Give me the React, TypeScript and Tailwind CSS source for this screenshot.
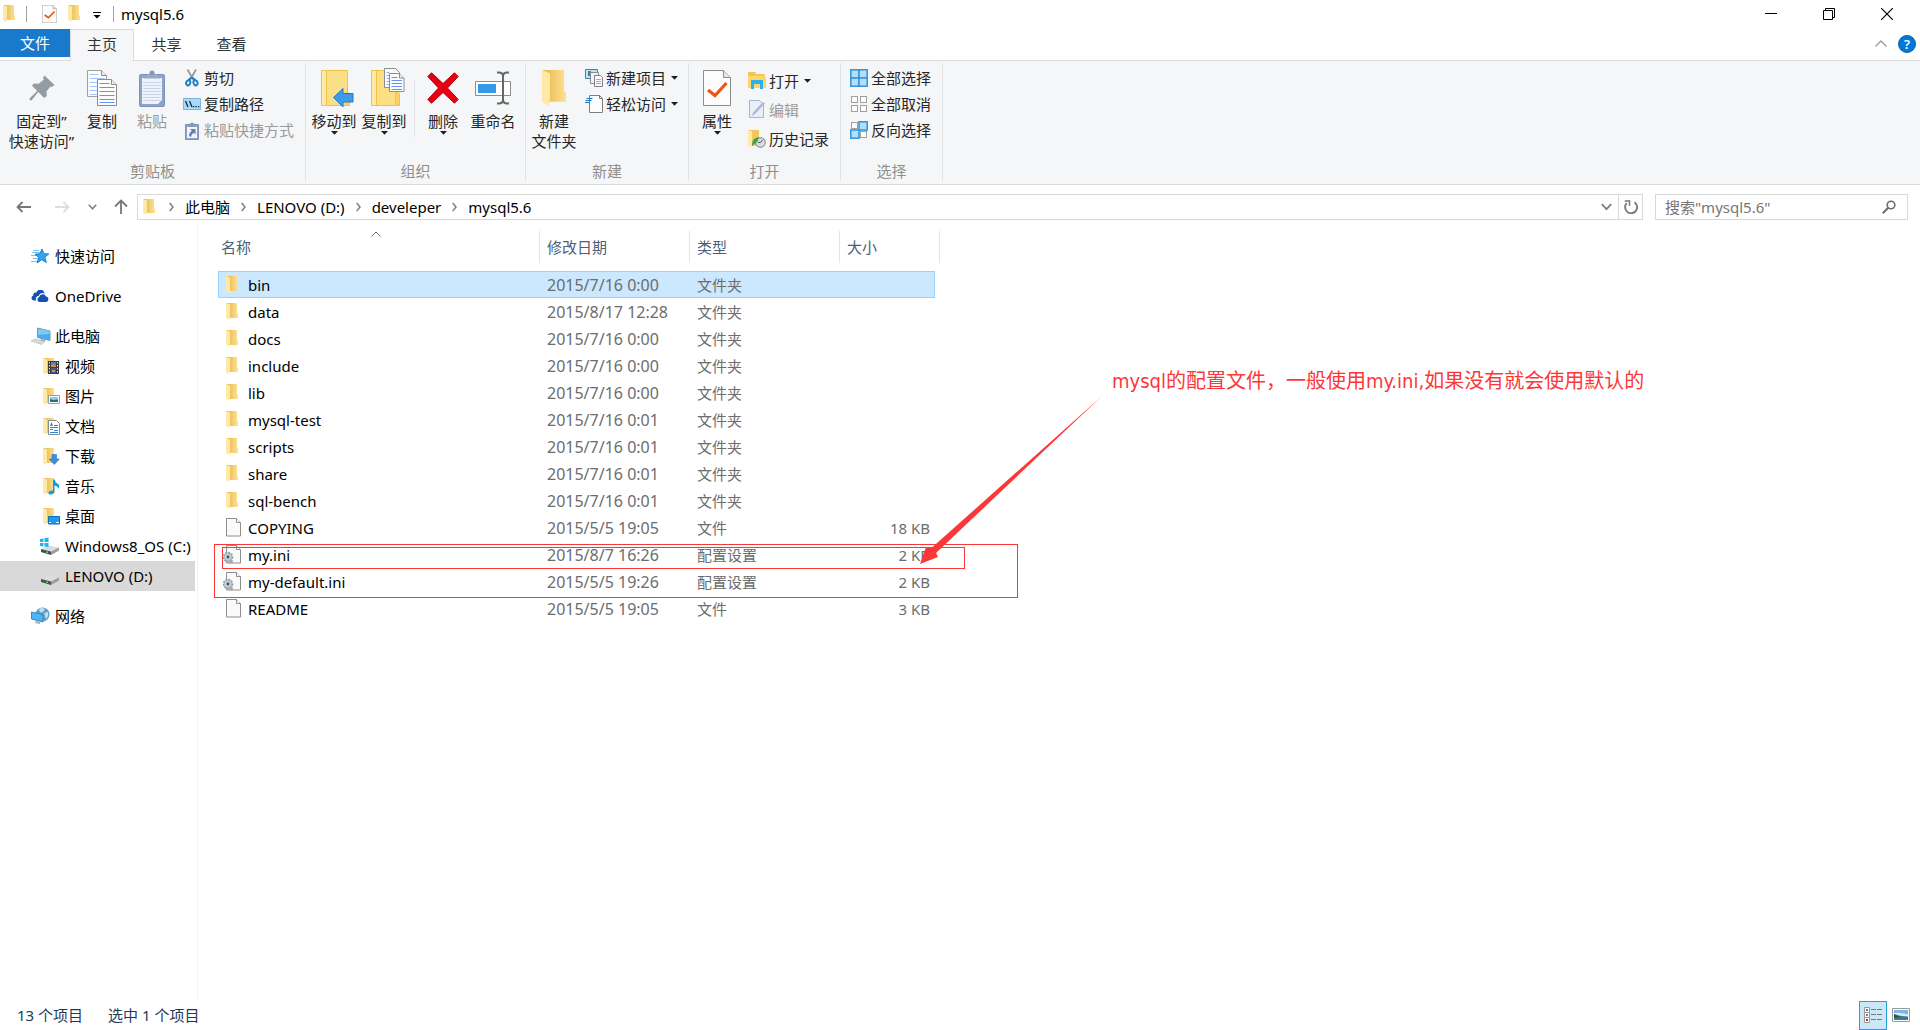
import { ReactNode, useState } from 'react';

interface FileEntry {
  name: string;
  date: string;
  kind: 'folder' | 'file' | 'ini';
  size?: string;
}

const files: FileEntry[] = [
  { name: 'bin', date: '2015/7/16 0:00', kind: 'folder' },
  { name: 'data', date: '2015/8/17 12:28', kind: 'folder' },
  { name: 'docs', date: '2015/7/16 0:00', kind: 'folder' },
  { name: 'include', date: '2015/7/16 0:00', kind: 'folder' },
  { name: 'lib', date: '2015/7/16 0:00', kind: 'folder' },
  { name: 'mysql-test', date: '2015/7/16 0:01', kind: 'folder' },
  { name: 'scripts', date: '2015/7/16 0:01', kind: 'folder' },
  { name: 'share', date: '2015/7/16 0:01', kind: 'folder' },
  { name: 'sql-bench', date: '2015/7/16 0:01', kind: 'folder' },
  { name: 'COPYING', date: '2015/5/5 19:05', kind: 'file', size: '18 KB' },
  { name: 'my.ini', date: '2015/8/7 16:26', kind: 'ini', size: '2 KB' },
  { name: 'my-default.ini', date: '2015/5/5 19:26', kind: 'ini', size: '2 KB' },
  { name: 'README', date: '2015/5/5 19:05', kind: 'file', size: '3 KB' },
];

const kindLabels = { folder: '文件夹', file: '文件', ini: '配置设置' };

/* ---------- icons ---------- */

const FolderShape = () => (
  <>
    <defs>
      <linearGradient id="folderBack" x1="0" x2="1" y1="0" y2="0">
        <stop offset="0.2" stopColor="#e9bd58" />
        <stop offset="1" stopColor="#ffe292" />
      </linearGradient>
    </defs>
    <path d="M0 0h11v10l1 .6V15H3z" fill="url(#folderBack)" />
    <path d="M0 0l4 1.6v12L3.2 17 0 15z" fill="#ffe9a6" />
  </>
);

const FolderIcon = ({ className = 'w-3 h-[17px]' }: { className?: string }) => (
  <svg viewBox="0 0 12 17" className={className} preserveAspectRatio="none">
    <FolderShape />
  </svg>
);

const PageIcon = () => (
  <svg viewBox="0 0 18 19" className="w-[18px] h-[19px]">
    <path d="M3.500.5h10l4 4V18h-14z" fill="#fafafa" stroke="#8e8e8e" />
    <path d="M13.500.5v4h4" fill="#fff" stroke="#8e8e8e" />
  </svg>
);

const IniIcon = () => (
  <svg viewBox="0 0 18 19" className="w-[18px] h-[19px]">
    <path d="M3.500.5h10l4 4V18h-14z" fill="#fafafa" stroke="#8e8e8e" />
    <path d="M13.500.5v4h4" fill="#fff" stroke="#8e8e8e" />
    <circle cx="5" cy="12" r="4.500" fill="#b7c3cd" stroke="#8d99a3" strokeWidth="1.500" strokeDasharray="1.800 1.200" />
    <circle cx="5" cy="12" r="3.200" fill="#c3ced6" />
    <circle cx="5" cy="12" r="1.400" fill="#46525c" />
    <circle cx="8" cy="16.500" r="2" fill="#9fabb5" />
  </svg>
);

const DownArrow = () => (
  <svg viewBox="0 0 7 4" className="w-[7px] h-1 shrink-0">
    <path d="M0 0h7L3.500 3.800z" fill="#1e1e1e" />
  </svg>
);

const CheckPage = ({ className }: { className: string }) => (
  <svg viewBox="0 0 28 36" className={className} preserveAspectRatio="none">
    <path d="M.5.5h20l7 7v28H.5z" fill="#fcfcfc" stroke="#8c8c8c" />
    <path d="M20.500.5v7h7" fill="#e6e6e6" stroke="#8c8c8c" />
    <path d="M5 20l7 5.500L23.500 13" fill="none" stroke="#f0550f" strokeWidth="3.200" />
  </svg>
);

const PinIcon = () => (
  <svg viewBox="0 0 26 26" className="w-[26px] h-[26px]">
    <path d="M15.500.5L25.500 10l-2.500 2-1.500-.4-4 4.600.3 4.800-2.600 2-6-6L2.500 25.500.5 25l.2-1.800L8.200 16 3 10.800l1.800-2.300 5 .2 5-4.300-.8-1.600z" fill="#939ca3" />
  </svg>
);

const CopyIcon = () => (
  <svg viewBox="0 0 30 36" className="w-[30px] h-9">
    <path d="M.5.5h14l5 5v21H.5z" fill="#fcfcfc" stroke="#a0a0a0" />
    <path d="M14.500.5v5h5" fill="#eee" stroke="#8c8c8c" />
    <path d="M2.500 4.500h9M2.500 8.500h15M2.500 12.500h15M2.500 16.500h8M2.500 20.500h8M2.500 24.500h8" stroke="#a9c6fb" />
    <path d="M10.500 9.500h14l5 5v21h-19z" fill="#fcfcfc" stroke="#8c8c8c" />
    <path d="M24.500 9.500v5h5" fill="#eee" stroke="#8c8c8c" />
    <path d="M12.500 13.500h10M12.500 17.500h15M12.500 21.500h15M12.500 25.500h15M12.500 29.500h15M12.500 32.500h15" stroke="#5f96f5" />
  </svg>
);

const PasteIcon = () => (
  <svg viewBox="0 0 26 37" className="w-[26px] h-[37px]">
    <rect x=".5" y="4.500" width="25" height="32" rx="1.500" fill="#8ea2c9" stroke="#7f92b8" />
    <path d="M3 8h20v26H3z" fill="#eef2fa" />
    <path d="M4 12.500h18M4 15.500h18M4 18.500h18M4 21.500h18M4 24.500h18M4 27.500h18M4 30.500h18" stroke="#c9d4ea" />
    <path d="M5 8.500l3-4h2.500a2.500 2.500 0 015 0H18l3 4z" fill="#9caac6" />
    <circle cx="13" cy="3" r="2.500" fill="#8896b5" />
    <path d="M23 30v4h-4z" fill="#8ea2c9" />
  </svg>
);

const ScissorsIcon = () => (
  <svg viewBox="0 0 14 18" className="w-3.5 h-[18px]">
    <path d="M2.500.5L8.500 11M11 .5L5 11" stroke="#8b959c" strokeWidth="1.600" />
    <path d="M6.500 8.500l-3 2.500M7 8.500l3.500 2.500" stroke="#1d80c4" strokeWidth="2" />
    <ellipse cx="3.200" cy="13.800" rx="2" ry="2.600" transform="rotate(20 3.200 13.800)" fill="none" stroke="#1d80c4" strokeWidth="2" />
    <ellipse cx="10.500" cy="13.800" rx="2" ry="2.600" transform="rotate(-20 10.500 13.800)" fill="none" stroke="#1d80c4" strokeWidth="2" />
  </svg>
);

const PathIcon = () => (
  <svg viewBox="0 0 18 12" className="w-[18px] h-3">
    <path d="M.5.5h17v11H.5z" fill="#a8dbfb" stroke="#7cb4dc" />
    <path d="M2.500 3l2.500 6M6.500 3L9 9" stroke="#1b2a38" strokeWidth="1.300" />
    <path d="M10 8h1.300v1.300H10zM12.500 8h1.300v1.300h-1.300zM15 8h1.300v1.300H15z" fill="#1b2a38" />
  </svg>
);

const PasteShortcutIcon = () => (
  <svg viewBox="0 0 14 19" className="w-3.5 h-[19px]">
    <path d="M.5 3.500h13v15H.5z" fill="#8ea2c9" stroke="#8195bc" />
    <path d="M2 6h10v11H2z" fill="#f1f4fa" />
    <path d="M3.500 5.500l1-3h1.300a1.300 1.300 0 012.500 0h1.300l1 3z" fill="#8795b3" />
    <path d="M5 8h5.500v5.500L8.700 11.800Q6 13.500 6 16L4 15q0-3.500 2.800-5.200z" fill="#667fae" />
  </svg>
);

const BigFolder = () => (
  <>
    <path d="M.5 2.500h26v35H.5z" fill="#fbdf84" stroke="#edc44b" />
    <path d="M5.500 3v34" stroke="#edc44b" />
    <path d="M1 3h4v34H1z" fill="#ffe9a4" />
    <path d="M24.500 37.500v-12l2-1.500 2 1.500v12z" fill="#fbd364" stroke="#edc44b" />
  </>
);

const MoveToIcon = () => (
  <svg viewBox="0 0 34 40" className="w-[34px] h-10 ml-2">
    <BigFolder />
    <path d="M12.500 29.500l9.500-9v5h10v8.500H22v5z" fill="#3d9be9" stroke="#2579c4" />
  </svg>
);

const CopyToIcon = () => (
  <svg viewBox="0 0 34 40" className="w-[34px] h-10 ml-2">
    <BigFolder />
    <path d="M13.500.5h11l4 4v15h-15z" fill="#fcfcfc" stroke="#8c8c8c" />
    <path d="M15.500 4.500h3M15.500 7.500h3M15.500 10.500h3M15.500 13.500h3M15.500 16.500h3" stroke="#8ab2f7" />
    <path d="M18.500 5.500h10l4.500 4.500v13.500H18.500z" fill="#fcfcfc" stroke="#8c8c8c" />
    <path d="M28.500 5.500V10H33" fill="#eee" stroke="#8c8c8c" />
    <path d="M20.500 9.500h6M20.500 12.500h10.500M20.500 15.500h10.500M20.500 18.500h10.500M20.500 21.500h10.500" stroke="#5f96f5" />
  </svg>
);

const DeleteIcon = () => (
  <svg viewBox="0 0 32 32" className="w-8 h-8">
    <path d="M4.500.8L16 11.500 27.500.8l3.700 3.700L20.500 16l10.700 11.500-3.700 3.700L16 20.500 4.500 31.200.8 27.500 11.500 16 .8 4.500z" fill="#e60012" stroke="#b4000e" />
  </svg>
);

const RenameIcon = () => (
  <svg viewBox="0 0 37 34" className="w-[37px] h-[34px]">
    <path d="M.5 10.500h35v14H.5z" fill="#fff" stroke="#8c8c8c" />
    <path d="M3 13h18v9H3z" fill="#3399ea" />
    <path d="M22 1.500h2q4 0 4 4v23q0 4-4 4h-2M34 1.500h-2q-4 0-4 4v23q0 4 4 4h2" fill="none" stroke="#666" strokeWidth="2" />
  </svg>
);

const NewItemIcon = () => (
  <svg viewBox="0 0 18 18" className="w-[18px] h-[18px]">
    <path d="M.5.5h12v9H.5z" fill="#bfe3f5" stroke="#3f84a8" />
    <path d="M3 2h3v5H3z" fill="#3f84a8" />
    <path d="M5.500 3.500h8v11h-8z" fill="#f4f4f4" stroke="#8c8c8c" />
    <path d="M9.500 6.500h6l2 2v9h-8z" fill="#fcfcfc" stroke="#7d7d8c" />
    <path d="M11 10.500h5M11 12.500h5M11 14.500h5" stroke="#8aaef0" />
  </svg>
);

const EasyAccessIcon = () => (
  <svg viewBox="0 0 18 18" className="w-[18px] h-[18px]">
    <path d="M4.500.5h10l3 3v14h-13z" fill="#fcfcfc" stroke="#7d7d7d" />
    <path d="M14.500.5v3h3" fill="none" stroke="#7d7d7d" />
    <path d="M1.500 3.500h6M.5 5.500h6M0 7.500h4.500" stroke="#1b74c0" strokeWidth="1.200" />
  </svg>
);

const OpenIcon = () => (
  <svg viewBox="0 0 18 17" className="w-[18px] h-[17px]">
    <path d="M0 0h8v2h9v3h1v11H0z" fill="#fbd76b" />
    <path d="M0 1h7M1 3h15" stroke="#e9b53a" />
    <path d="M3 8h12v9h-3v-5H6v5H3z" fill="#2fb0ea" />
  </svg>
);

const EditIcon = () => (
  <svg viewBox="0 0 17 19" className="w-[17px] h-[19px]">
    <path d="M.5.5h10l4 4v13H.5z" fill="#e9eef8" stroke="#a6b5d2" />
    <path d="M2.500 16.500l2-4.500L14 2l2 1.500L6 14z" fill="#a9b9d7" />
  </svg>
);

const HistoryIcon = () => (
  <svg viewBox="0 0 18 18" className="w-[18px] h-[18px]">
    <path d="M0 0h11v8H9v8H4z" fill="#f0c863" />
    <path d="M0 0l4 1.600V14l-1 3-3-2z" fill="#ffe9a6" />
    <circle cx="12.500" cy="12.500" r="4.800" fill="#d9dde0" stroke="#7c8083" />
    <path d="M12.500 12.500l2-2.500M12.500 12.500h-2.500" stroke="#555" />
    <path d="M4 16q-.5-8 7-9L9.500 11.500z" fill="#2fa83c" />
  </svg>
);

const SelectIcon = ({ filled }: { filled: boolean[] }) => (
  <svg viewBox="0 0 18 18" className="w-[18px] h-[18px]">
    {filled.map((on, i) => {
      const inset = on ? 0.800 : 1.500;
      const side = on ? 8.200 : 6;
      return (
        <rect
          key={i}
          x={i % 2 ? (on ? 9 : 10.500) : inset}
          y={i > 1 ? (on ? 9 : 10.500) : inset}
          width={side}
          height={side}
          fill={on ? '#b5def9' : '#fcfcfc'}
          stroke={on ? '#3a96dd' : '#a0a0a0'}
          strokeWidth={on ? 1.600 : 1}
        />
      );
    })}
  </svg>
);

const Chevron = () => (
  <svg viewBox="0 0 5 10" className="w-[5px] h-2.5 shrink-0">
    <path d="M.7 1L4 5 .7 9" fill="none" stroke="#808080" strokeWidth="1.500" />
  </svg>
);

const StarIcon = () => (
  <svg viewBox="0 0 18 17" className="w-[18px] h-[17px]">
    <path d="M1 4.500h8M2 2.500h6M0 7.500h6M2 10.500h5M0 13.500h6" stroke="#7cc3f2" />
    <path d="M11 1l1.800 4.700 5 .3-4 3 1.500 5.500-4.500-2.800L6 15l1.800-5.500L4 6.200l5-.5z" fill="#35a5ef" stroke="#1b7fc9" />
  </svg>
);

const CloudIcon = () => (
  <svg viewBox="0 0 18 12" className="w-[18px] h-3">
    <path d="M5 10.500H2.500a2.600 2.600 0 01-.3-5A3 3 0 015.500 2.500 4 4 0 0113 2q.6 1 .5 1.600Q9.500 1.500 7.500 6 4 6.500 5 10.500z" fill="#1650b4" />
    <path d="M8 12a2.600 2.600 0 01.2-5 3.700 3.700 0 016.900-.6A2.900 2.900 0 0115.500 12z" fill="#1650b4" />
    <path d="M7.500 12a3 3 0 01.2-5.500" fill="none" stroke="#fff" strokeWidth=".8" />
  </svg>
);

const PcIcon = () => (
  <svg viewBox="0 0 20 18" className="w-5 h-[18px]">
    <path d="M6.500 1l12.500 3v9.500L6.500 10.500z" fill="#45aef3" stroke="#7d95a5" />
    <path d="M7 1.500L18.500 4v3L7 8z" fill="#7cc9f8" />
    <path d="M10 12l4 1v2l-5-1z" fill="#9aa4ab" />
    <path d="M0 14l4-2 10 2.500-3.500 3z" fill="#d3d9dd" stroke="#b4bcc2" strokeWidth=".6" />
  </svg>
);

const NavFolder = ({ children }: { children: ReactNode }) => (
  <svg viewBox="0 0 17 17" className="w-[17px] h-[17px]">
    <FolderShape />
    {children}
  </svg>
);

const DriveShape = () => (
  <>
    <path d="M1 12l7-3.500 11 2-8 4z" fill="#dcdcdc" />
    <path d="M1 12l10 2.500V18L1 15z" fill="#4c4f51" />
    <path d="M11 14.500l8-4v3L11 18z" fill="#9b9b9b" />
    <path d="M6 14.500h2V16H6z" fill="#4be04b" />
  </>
);

const WindowsDriveIcon = () => (
  <svg viewBox="0 0 20 18" className="w-5 h-[18px]">
    <DriveShape />
    <path d="M0 2l3.500-.6V5H0zM4.500 1.200L8.500.5V5h-4zM0 6h3.500v3.500L0 9zM4.500 6h4v4l-4-.5z" fill="#19b6ee" />
  </svg>
);

const DriveIcon = () => (
  <svg viewBox="0 0 20 18" className="w-5 h-[18px]">
    <DriveShape />
  </svg>
);

const NetworkIcon = () => (
  <svg viewBox="0 0 19 18" className="w-[19px] h-[18px]">
    <circle cx="11.500" cy="7.500" r="7" fill="#5f9fc2" />
    <path d="M8 2q3-2 6 0l-2 3-3 .5zM13 6l4-1q1 4-2 7z" fill="#bfe0ec" />
    <path d="M.5 5l11.500 2.500V15L.5 12z" fill="#4bb5f5" stroke="#3c87b8" />
    <path d="M5 14l4 1v2l-5-1z" fill="#a5adb3" />
  </svg>
);

/* ---------- ribbon ---------- */

interface RibbonGroupProps {
  label: string;
  className: string;
  pad?: string;
  children: ReactNode;
}

const RibbonGroup = ({ label, className, pad = 'pl-[3px]', children }: RibbonGroupProps) => (
  <div className={`flex flex-col border-r border-[#e0e1e3] my-0.5 ${className}`}>
    <div className={`flex items-start h-[98px] pt-0.5 ${pad}`}>{children}</div>
    <div className="text-center text-[#8f8f8f]">{label}</div>
  </div>
);

interface BigButtonProps {
  icon: ReactNode;
  lines: string[];
  arrow?: boolean;
  disabled?: boolean;
  className?: string;
}

const BigButton = ({ icon, lines, arrow, disabled, className = 'w-[50px]' }: BigButtonProps) => (
  <button
    disabled={disabled}
    className={`flex flex-col items-center shrink-0 pt-0.5 whitespace-nowrap text-[#262626] disabled:text-[#9a9a9a] ${className}`}
  >
    <span className="flex items-center justify-center h-[42px] mb-0.5">{icon}</span>
    {lines.map((line) => (
      <span key={line}>{line}</span>
    ))}
    {arrow && <DownArrow />}
  </button>
);

interface SmallButtonProps {
  icon: ReactNode;
  text: string;
  arrow?: boolean;
  disabled?: boolean;
  className?: string;
}

const SmallButton = ({ icon, text, arrow, disabled, className = 'h-[26px]' }: SmallButtonProps) => (
  <button
    disabled={disabled}
    className={`flex items-center gap-[3px] whitespace-nowrap text-[#262626] disabled:text-[#9a9a9a] ${className}`}
  >
    <span className="flex justify-center w-[18px]">{icon}</span>
    <span>{text}</span>
    {arrow && <span className="ml-0.5"><DownArrow /></span>}
  </button>
);

const Ribbon = () => (
  <div className="flex bg-[#f5f6f7] border-y border-[#dadbdc] pb-px">
    <RibbonGroup label="剪贴板" className="w-[306px]" pad="pl-1.5">
      <BigButton icon={<PinIcon />} lines={['固定到”', '快速访问”']} className="w-[71px]" />
      <BigButton icon={<CopyIcon />} lines={['复制']} />
      <BigButton icon={<PasteIcon />} lines={['粘贴']} disabled />
      <div className="ml-1.5">
        <SmallButton icon={<ScissorsIcon />} text="剪切" />
        <SmallButton icon={<PathIcon />} text="复制路径" />
        <SmallButton icon={<PasteShortcutIcon />} text="粘贴快捷方式" disabled />
      </div>
    </RibbonGroup>
    <RibbonGroup label="组织" className="w-[220px]">
      <BigButton icon={<MoveToIcon />} lines={['移动到']} arrow />
      <BigButton icon={<CopyToIcon />} lines={['复制到']} arrow />
      <div className="w-px h-14 mt-4 ml-[5px] mr-[3px] bg-[#e0e1e3]" />
      <BigButton icon={<DeleteIcon />} lines={['删除']} arrow />
      <BigButton icon={<RenameIcon />} lines={['重命名']} />
    </RibbonGroup>
    <RibbonGroup label="新建" className="w-[163px]">
      <BigButton icon={<FolderIcon className="w-6 h-9" />} lines={['新建', '文件夹']} />
      <div className="ml-1.5">
        <SmallButton icon={<NewItemIcon />} text="新建项目" arrow />
        <SmallButton icon={<EasyAccessIcon />} text="轻松访问" arrow />
      </div>
    </RibbonGroup>
    <RibbonGroup label="打开" className="w-[152px]">
      <BigButton icon={<CheckPage className="w-7 h-9" />} lines={['属性']} arrow />
      <div className="ml-1.5 pt-px">
        <SmallButton icon={<OpenIcon />} text="打开" arrow className="h-[29px]" />
        <SmallButton icon={<EditIcon />} text="编辑" disabled className="h-[29px]" />
        <SmallButton icon={<HistoryIcon />} text="历史记录" className="h-[29px]" />
      </div>
    </RibbonGroup>
    <RibbonGroup label="选择" className="w-[102px]" pad="pl-[9px]">
      <div>
        <SmallButton icon={<SelectIcon filled={[true, true, true, true]} />} text="全部选择" />
        <SmallButton icon={<SelectIcon filled={[false, false, false, false]} />} text="全部取消" />
        <SmallButton icon={<SelectIcon filled={[false, true, true, false]} />} text="反向选择" />
      </div>
    </RibbonGroup>
  </div>
);

/* ---------- title, tabs, address ---------- */

const TitleBar = () => (
  <header className="flex items-center h-[29px] pl-[3px] pr-1 pb-0.5">
    <FolderIcon />
    <div className="w-px h-4 ml-[11px] mr-[15px] bg-[#a0a0a0]" />
    <button aria-label="属性"><CheckPage className="w-[15px] h-[18px]" /></button>
    <button aria-label="新建文件夹" className="ml-[11px]"><FolderIcon /></button>
    <button aria-label="自定义快速访问工具栏" className="ml-[13px]">
      <svg viewBox="0 0 8 7" className="w-2 h-[7px] mt-1">
        <path d="M0 .5h8" stroke="#000" />
        <path d="M.5 3h7L4 6.500z" fill="#000" />
      </svg>
    </button>
    <div className="w-px h-4 ml-3 mr-[7px] bg-[#a0a0a0]" />
    <h1>mysql5.6</h1>
    <div className="flex ml-auto">
      <button aria-label="最小化" className="flex justify-center w-[58px]">
        <svg viewBox="0 0 12 12" className="w-3 h-3"><path d="M0 5.500h12" stroke="#000" /></svg>
      </button>
      <button aria-label="还原" className="flex justify-center w-[58px]">
        <svg viewBox="0 0 12 12" className="w-3 h-3" fill="none" stroke="#000">
          <path d="M.5 2.500h9v9h-9zM2.500 2.500v-2h9v9h-2" />
        </svg>
      </button>
      <button aria-label="关闭" className="flex justify-center w-[58px]">
        <svg viewBox="0 0 12 12" className="w-3 h-3"><path d="M0 0l12 12M12 0L0 12" stroke="#000" strokeWidth="1.200" /></svg>
      </button>
    </div>
  </header>
);

const TabBar = () => (
  <div className="flex h-[31px] text-[#333]">
    <button className="w-[70px] h-7 bg-[#1979ca] text-white">文件</button>
    <button className="relative z-10 w-16 h-8 pb-[3px] bg-[#f5f6f7] border border-b-0 border-[#dadbdc]">主页</button>
    <button className="w-[65px] pb-0.5">共享</button>
    <button className="w-[65px] pb-0.5">查看</button>
    <div className="flex items-center gap-[11px] ml-auto pr-1 pb-0.5">
      <button aria-label="最小化功能区">
        <svg viewBox="0 0 12 7" className="w-3 h-[7px]"><path d="M.5 6.500L6 1l5.500 5.500" fill="none" stroke="#999" strokeWidth="1.300" /></svg>
      </button>
      <button aria-label="帮助" className="flex items-center justify-center w-[18px] h-[18px] rounded-full bg-[#0078d7] border border-[#0a63b0] text-white text-[13px] font-semibold">
        ?
      </button>
    </div>
  </div>
);

const crumbs = ['此电脑', 'LENOVO (D:)', 'develeper', 'mysql5.6'];

const AddressBar = () => (
  <div className="flex items-center h-10 pl-4 pr-3 pb-px pt-1">
    <button aria-label="返回">
      <svg viewBox="0 0 15 12" className="w-[15px] h-3"><path d="M15 6H1.500M6.500 1l-5 5 5 5" fill="none" stroke="#777" strokeWidth="1.800" /></svg>
    </button>
    <button aria-label="前进" disabled className="ml-6">
      <svg viewBox="0 0 15 12" className="w-[15px] h-3"><path d="M0 6h13.500M8.500 1l5 5-5 5" fill="none" stroke="#ddd" strokeWidth="1.800" /></svg>
    </button>
    <button aria-label="最近浏览的位置" className="ml-[18px]">
      <svg viewBox="0 0 9 6" className="w-[9px] h-1.5"><path d="M.8.8l3.700 4 3.700-4" fill="none" stroke="#808080" strokeWidth="1.600" /></svg>
    </button>
    <button aria-label="上移" className="ml-[17px]">
      <svg viewBox="0 0 14 15" className="w-3.5 h-[15px]"><path d="M7 15V1.500M1 7.500l6-6 6 6" fill="none" stroke="#777" strokeWidth="1.800" /></svg>
    </button>
    <div className="flex flex-1 items-center h-[26px] ml-[9px] border border-[#d9d9d9]">
      <span className="ml-[5px] mr-[14px]"><FolderIcon className="w-3 h-4" /></span>
      {crumbs.map((crumb) => (
        <span key={crumb} className="flex items-center mr-[11px] gap-[11px]">
          <Chevron />
          <button>{crumb}</button>
        </span>
      ))}
      <button aria-label="以前的位置" className="ml-auto mr-1.5">
        <svg viewBox="0 0 11 8" className="w-[11px] h-2"><path d="M.8 1.200l4.700 5 4.700-5" fill="none" stroke="#808080" strokeWidth="1.800" /></svg>
      </button>
      <button aria-label="刷新" className="flex items-center justify-center w-6 h-full border-l border-[#d9d9d9]">
        <svg viewBox="0 0 14 14" className="w-3.5 h-3.5" fill="none" stroke="#777" strokeWidth="1.800">
          <path d="M10.500 2.300A6 6 0 112.700 3.200" />
          <path d="M.8 1h4.700v4.700" strokeWidth="1.500" />
        </svg>
      </button>
    </div>
    <label className="flex items-center w-[253px] h-[26px] ml-3 pl-[9px] pr-[11px] border border-[#d9d9d9]">
      <input
        type="text"
        aria-label="搜索"
        placeholder={'搜索"mysql5.6"'}
        className="flex-1 min-w-0 outline-none placeholder:text-[#767676]"
      />
      <svg viewBox="0 0 14 14" className="w-3.5 h-3.5" fill="none" stroke="#6d6d6d">
        <circle cx="9" cy="5" r="3.800" strokeWidth="1.600" />
        <path d="M6.200 7.800L.8 13.200" strokeWidth="2" />
      </svg>
    </label>
  </div>
);

/* ---------- navigation pane ---------- */

interface NavItemProps {
  icon: ReactNode;
  text: string;
  child?: boolean;
  selected?: boolean;
}

const NavItem = ({ icon, text, child, selected }: NavItemProps) => (
  <a
    href="#"
    className={`flex items-center h-[30px] whitespace-nowrap overflow-hidden ${child ? 'pl-10' : 'pl-[31px]'} ${selected ? 'bg-[#d9d9d9]' : ''}`}
  >
    <span className={`flex shrink-0 w-5 ${child ? 'justify-end mr-[5px]' : 'mr-1'}`}>{icon}</span>
    {text}
  </a>
);

const NavPane = () => (
  <nav className="flex flex-col gap-2.5 w-[198px] shrink-0 pt-4 pr-0.5 border-r border-[#f3f3f3]">
    <NavItem icon={<StarIcon />} text="快速访问" />
    <NavItem icon={<CloudIcon />} text="OneDrive" />
    <div>
      <NavItem icon={<PcIcon />} text="此电脑" />
      <NavItem
        child
        text="视频"
        icon={
          <NavFolder>
            <path d="M5 3h11v13H5z" fill="#3c3c3c" />
            <path d="M8 4h5v5H8z" fill="#4a80d8" />
            <path d="M8 10h5v5H8z" fill="#2e5fb4" />
            <path d="M8 7l3-1 2 2v1H8zM9 12h3v2H9z" fill="#d98f3c" />
            <path d="M6.500 4v12M14.500 4v12" stroke="#ddd" strokeDasharray="1.500 1.500" />
          </NavFolder>
        }
      />
      <NavItem
        child
        text="图片"
        icon={
          <NavFolder>
            <path d="M5.500 7.500h11v8h-11z" fill="#fff" stroke="#9b9b9b" />
            <path d="M7 9h8v5H7z" fill="#8cc8f0" />
            <path d="M7 11l3 1 5-.5V14H7z" fill="#2f6d77" />
          </NavFolder>
        }
      />
      <NavItem
        child
        text="文档"
        icon={
          <NavFolder>
            <path d="M5.500 2.500h8l3 3v11h-11z" fill="#fff" stroke="#8c8c8c" />
            <path d="M7 9.500h8M7 11.500h3M7 14.500h8M11 7.500h4M11 12.500h4" stroke="#2f8ad6" />
            <path d="M7 8l1.500-4L10 8z" fill="#2f8ad6" />
          </NavFolder>
        }
      />
      <NavItem
        child
        text="下载"
        icon={
          <NavFolder>
            <path d="M9 6.500h4.500V11h2.800l-5 5.500L6.200 11H9z" fill="#3b8fdd" stroke="#2a74bd" strokeWidth=".6" />
          </NavFolder>
        }
      />
      <NavItem
        child
        text="音乐"
        icon={
          <NavFolder>
            <path d="M10 1.500h1.500q.5 3 3.500 4.500 2 2 .5 5-.5-3-4-3.500V14q-1 2.500-4 2.500-2.500 0-2-2Q6.500 12 10 12.500z" fill="#0c9bf2" />
          </NavFolder>
        }
      />
      <NavItem
        child
        text="桌面"
        icon={
          <NavFolder>
            <path d="M5.500 8.500h11v7.500h-11z" fill="#1c9cf0" stroke="#0f6fb4" />
            <path d="M6 14.500h2M13 14.500h3" stroke="#fff" />
          </NavFolder>
        }
      />
      <NavItem child icon={<WindowsDriveIcon />} text="Windows8_OS (C:)" />
      <NavItem child selected icon={<DriveIcon />} text="LENOVO (D:)" />
    </div>
    <NavItem icon={<NetworkIcon />} text="网络" />
  </nav>
);

/* ---------- file list ---------- */

const columns = [
  { label: '名称', cell: 'w-[322px]', pad: 'pl-[3px]' },
  { label: '修改日期', cell: 'w-[150px]', pad: 'pl-[7px]' },
  { label: '类型', cell: 'w-[150px]', pad: 'pl-[7px]' },
  { label: '大小', cell: 'w-[95px]', pad: 'pl-[7px] -mr-[5px]' },
];

const FileList = () => {
  const [selected, setSelected] = useState('bin');

  return (
    <table className="table-fixed w-[717px] ml-5 mt-1.5 border-collapse text-[#6d6d6d]">
      <thead>
        <tr>
          {columns.map((col, index) => (
            <th key={col.label} className={`p-0 pb-2 font-normal text-left text-[#4c607a] ${col.cell}`}>
              <div className={`relative flex items-center h-8 border-r border-[#e5e5e5] ${col.pad}`}>
                <button>{col.label}</button>
                {index === 0 && (
                  <svg viewBox="0 0 10 6" className="absolute top-0 left-[153px] w-2.5 h-1.5">
                    <path d="M.5 5.500L5 1l4.500 4.500" fill="none" stroke="#6d6d6d" />
                  </svg>
                )}
              </div>
            </th>
          ))}
        </tr>
      </thead>
      <tbody>
        {files.map((file) => (
          <tr
            key={file.name}
            onClick={() => setSelected(file.name)}
            className={`h-[27px] ${selected === file.name ? 'bg-[#cce8ff] outline outline-[#99d1ff] -outline-offset-1' : ''}`}
          >
            <td className="p-0 text-black">
              <div className="flex items-center">
                <span className="flex w-[18px] ml-[5px] mr-[7px]">
                  {file.kind === 'folder' && <span className="ml-[3px]"><FolderIcon /></span>}
                  {file.kind === 'file' && <PageIcon />}
                  {file.kind === 'ini' && <IniIcon />}
                </span>
                {file.name}
              </div>
            </td>
            <td className="p-0 pl-[7px] text-[16px]">{file.date}</td>
            <td className="p-0 pl-[7px]">{kindLabels[file.kind]}</td>
            <td className="p-0 pr-[5px] text-right">{file.size}</td>
          </tr>
        ))}
      </tbody>
    </table>
  );
};

/* red markers drawn on top of the list */
const Annotations = () => (
  <div className="pointer-events-none text-[#fb3838]">
    <div className="absolute left-4 top-[319px] w-[804px] h-[54px] border border-[#fb3838]" />
    <div className="absolute left-6 top-[322px] w-[743px] h-[22px] border border-[#fb3838]" />
    <svg viewBox="0 0 184 170" className="absolute left-[722px] top-[170px] w-[184px] h-[170px]">
      <path d="M182 1L16 158l2 4L0 169l6-17 6 .5z" fill="#fb3838" />
    </svg>
    <p className="absolute left-[914px] top-36 whitespace-nowrap text-xl leading-6 font-['DejaVu_Sans_Condensed','Noto_Sans_CJK_SC',sans-serif]">
      mysql的配置文件，一般使用my.ini,如果没有就会使用默认的
    </p>
  </div>
);

const StatusBar = () => (
  <footer className="flex items-center h-[30px] pl-[17px] pr-2.5 text-[#1e395b]">
    <span>13 个项目</span>
    <span className="ml-[25px]">选中 1 个项目</span>
    <div className="flex items-center gap-[5px] ml-auto">
      <button aria-label="详细信息" className="flex items-center justify-center w-7 h-[29px] bg-[#cce8f6] border border-[#26a0da]">
        <svg viewBox="0 0 18 16" className="w-[18px] h-4">
          <path d="M.5.5h5v5h-5zM.5 5.500h5v5h-5zM.5 10.500h5v5h-5z" fill="#fff" stroke="#999" />
          <path d="M2 2h2v2H2z" fill="#3f86c8" />
          <path d="M2 7h2v2H2z" fill="#7c8a30" />
          <path d="M2 12h2v2H2z" fill="#c0392b" />
          <path d="M7 2.500h5M13 2.500h5M7 7.500h5M13 7.500h5M7 12.500h5M13 12.500h5" stroke="#777" />
        </svg>
      </button>
      <button aria-label="大缩略图">
        <svg viewBox="0 0 18 14" className="w-[18px] h-3.5">
          <path d="M.5.5h17v13H.5z" fill="#fff" stroke="#999" />
          <path d="M2 2h14v10H2z" fill="#7fb6ea" />
          <path d="M2 5q6-1 14 1.500V8H2z" fill="#d8ebf7" />
          <path d="M2 6l5 1.500L16 9v3H2z" fill="#3b7d8c" />
          <path d="M2 6.500l4 1.500 3 1-7 1z" fill="#2c5b3a" />
        </svg>
      </button>
    </div>
  </footer>
);

export default function App() {
  return (
    <div className="flex flex-col min-h-screen bg-white text-black text-[15px] leading-5 font-['Noto_Sans','Noto_Sans_CJK_SC',sans-serif]">
      <TitleBar />
      <TabBar />
      <Ribbon />
      <AddressBar />
      <div className="flex flex-1">
        <NavPane />
        <main className="relative flex-1">
          <FileList />
          <Annotations />
        </main>
      </div>
      <StatusBar />
    </div>
  );
}
